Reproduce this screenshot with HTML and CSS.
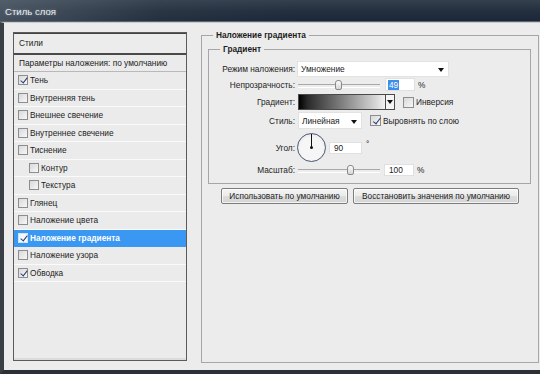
FILE: index.html
```html
<!DOCTYPE html>
<html>
<head>
<meta charset="utf-8">
<link rel="stylesheet" href="styles.css">
</head>
<body>
<div class="window">
  <div class="titlebar">Стиль слоя</div>
  <div class="frame">
    <div class="sidebar">
      <div class="side-head">Стили</div>
      <div class="side-list">
        <div class="row first">Параметры наложения: по умолчанию</div>
        <div class="row"><span class="cb on"></span>Тень</div>
        <div class="row"><span class="cb"></span>Внутренняя тень</div>
        <div class="row"><span class="cb"></span>Внешнее свечение</div>
        <div class="row"><span class="cb"></span>Внутреннее свечение</div>
        <div class="row"><span class="cb"></span>Тиснение</div>
        <div class="row sub"><span class="cb"></span>Контур</div>
        <div class="row sub"><span class="cb"></span>Текстура</div>
        <div class="row"><span class="cb"></span>Глянец</div>
        <div class="row"><span class="cb"></span>Наложение цвета</div>
        <div class="row active"><span class="cb on"></span>Наложение градиента</div>
        <div class="row"><span class="cb"></span>Наложение узора</div>
        <div class="row"><span class="cb on"></span>Обводка</div>
      </div>
    </div>
    <div class="main">
      <div class="group outer">
        <span class="legend">Наложение градиента</span>
        <div class="group inner">
          <span class="legend">Градиент</span>
          <div class="frow r1">
            <span class="flabel">Режим наложения:</span>
            <div class="select blend"><span>Умножение</span><i class="arrow"></i></div>
          </div>
          <div class="frow r2">
            <span class="flabel">Непрозрачность:</span>
            <div class="slider"><span class="thumb" style="left: 49%"></span></div>
            <div class="input"><span class="sel">49</span></div>
            <span class="unit">%</span>
          </div>
          <div class="frow r3">
            <span class="flabel">Градиент:</span>
            <div class="swatch"></div>
            <div class="swatch-arrow"><i class="arrow"></i></div>
            <span class="cb inv"></span><span class="cblabel">Инверсия</span>
          </div>
          <div class="frow r4">
            <span class="flabel">Стиль:</span>
            <div class="select style"><span>Линейная</span><i class="arrow"></i></div>
            <span class="cb on align"></span><span class="cblabel">Выровнять по слою</span>
          </div>
          <div class="frow r5">
            <span class="flabel">Угол:</span>
            <div class="dial"><span class="hand"></span><span class="dot"></span></div>
            <div class="input angle">90</div>
            <span class="deg">°</span>
          </div>
          <div class="frow r6">
            <span class="flabel">Масштаб:</span>
            <div class="slider"><span class="thumb" style="left: 63%"></span></div>
            <div class="input scale">100</div>
            <span class="unit">%</span>
          </div>
        </div>
        <div class="buttons">
          <button class="btn b1">Использовать по умолчанию</button>
          <button class="btn b2">Восстановить значения по умолчанию</button>
        </div>
      </div>
    </div>
  </div>
</div>
</body>
</html>
```
FILE: styles.css
```css
* { box-sizing: border-box; }
html, body { margin: 0; padding: 0; }
body {
  font-family: "Liberation Sans", Arial, sans-serif;
  font-size: 8.3px;
  color: #1c1c1c;
  background: #ececec;
}
.window {
  width: 540px;
  height: 374px;
  display: flex;
  flex-direction: column;
  background: #ececec;
  overflow: hidden;
}
.titlebar {
  height: 22px;
  flex: none;
  padding-left: 5px;
  line-height: 23px;
  font-size: 9.6px;
  color: #e9eef4;
  text-shadow: 0 0 3px rgba(255,255,255,0.35);
  background:
    linear-gradient(90deg, rgba(120,130,142,0.45) 0%, rgba(80,90,102,0.15) 30%, rgba(0,0,0,0) 55%),
    linear-gradient(#34404e 0%, #24303f 50%, #1c2737 100%);
  border-bottom: 1px solid #5a6473;
}
.frame {
  flex: 1;
  display: flex;
  background: #ececec;
  border-top: 1px solid #c9cbce;
  border-left: 4px solid #3a3f45;
  border-bottom: 4px solid #2b3036;
}

/* sidebar */
.sidebar {
  width: 174px;
  margin: 9px 0 9px 9px;
  display: flex;
  flex-direction: column;
  border: 1px solid #5b5b5b;
  background: #ebebeb;
  box-shadow: inset 0 -2px 0 #dcdcdc;
}
.side-head {
  height: 22px;
  flex: none;
  padding-left: 5px;
  line-height: 19px;
  border-top: 1px solid #444;
  border-bottom: 2px solid #4a4a4a;
  background: #ececec;
}
.side-list { flex: 1; }
.row {
  height: 17.5px;
  display: flex;
  align-items: center;
  padding-left: 4px;
  border-bottom: 1px solid #fafafa;
  white-space: nowrap;
}
.row.first {
  height: 17px;
  padding-left: 5px;
  border-bottom: 1px solid #b9b9b9;
}
.row.sub { padding-left: 15px; }
.row.active {
  background: #3a97f2;
  color: #fff;
  font-weight: bold;
  border-bottom-color: #3a97f2;
}
.cb {
  position: relative;
  display: inline-block;
  flex: none;
  width: 10px;
  height: 10px;
  margin-right: 2px;
  border: 1px solid #8c8d8f;
  background: linear-gradient(135deg, #d9d9d9, #f7f7f7);
}
.row.active .cb { border-color: #d0e4f8; background: #f4f7fb; }
.cb.on::after {
  content: "";
  position: absolute;
  left: 3px;
  top: 0px;
  width: 3px;
  height: 6px;
  border: solid #2a3f73;
  border-width: 0 1.5px 1.5px 0;
  transform: rotate(38deg);
}

/* main */
.main {
  flex: 1;
  display: flex;
  margin: 12px 1px 7px 14px;
}
.group {
  position: relative;
  border: 1px solid #a6a6a6;
}
.legend {
  position: absolute;
  top: -7px;
  left: 11px;
  padding: 0 3px;
  background: #ececec;
  font-weight: bold;
  line-height: 12px;
}
.outer { flex: 1; }
.inner {
  margin: 13px 7px 0 6px;
  padding: 11px 0 6px 0;
  height: 135px;
}
.frow {
  display: flex;
  align-items: center;
  white-space: nowrap;
}
.flabel {
  width: 86px;
  flex: none;
  text-align: right;
  margin-right: 2px;
}
.r1 { height: 16px; }
.r2 { height: 13px; margin-top: 1px; }
.r3 { height: 16px; margin-top: 3px; }
.r4 { height: 17px; margin-top: 2px; }
.r5 { height: 29px; margin-top: 4px; }
.r6 { height: 12px; margin-top: 2px; }

.select {
  position: relative;
  height: 100%;
  background: #fff;
  border: 1px solid #e2e2e2;
  display: flex;
  align-items: center;
  padding-left: 3px;
}
.select.blend { width: 152px; }
.select.style { width: 64px; margin-left: 1px; }
.arrow {
  display: block;
  width: 0;
  height: 0;
  border-left: 3.5px solid transparent;
  border-right: 3.5px solid transparent;
  border-top: 4px solid #111;
}
.select .arrow { position: absolute; right: 4px; top: 50%; margin-top: -1px; }

.slider {
  position: relative;
  width: 82px;
  height: 100%;
  margin-left: 1px;
  flex: none;
}
.slider::before {
  content: "";
  position: absolute;
  left: 0;
  right: 0;
  top: 50%;
  height: 2px;
  margin-top: -1px;
  border-top: 1px solid #a8a8a8;
  border-bottom: 1px solid #fff;
}
.thumb {
  position: absolute;
  top: 50%;
  width: 7px;
  height: 10px;
  margin: -5px 0 0 -3px;
  border: 1px solid #8a8a8a;
  border-radius: 3px 3px 2px 2px;
  background: linear-gradient(#fdfdfd, #d5d5d5);
}
.input {
  height: 100%;
  width: 30px;
  margin-left: 5px;
  background: #fff;
  border: 1px solid #e0e0e0;
  padding-left: 2px;
  display: flex;
  align-items: center;
}
.sel {
  background: #3d8ee8;
  color: #fff;
  padding: 0 1px;
  line-height: 10px;
}
.input.angle { width: 33px; height: 12px; margin-left: 3px; padding-left: 4px; }
.input.scale { margin-left: 4px; padding-left: 4px; }
.unit { margin-left: 3px; }
.deg { margin-left: 4px; align-self: flex-start; margin-top: 6px; }

.swatch {
  width: 88px;
  height: 100%;
  margin-left: 1px;
  border: 1px solid #4a4a4a;
  background: linear-gradient(90deg, #000 0%, #2a2a2a 10%, #808080 50%, #d8d8d8 90%, #f2f2f2 100%);
}
.swatch-arrow {
  width: 9px;
  height: 100%;
  border: 1px solid #4a4a4a;
  border-left: none;
  background: #f4f4f4;
  display: flex;
  align-items: center;
  justify-content: center;
}
.swatch-arrow .arrow { border-left-width: 3px; border-right-width: 3px; border-top-width: 4px; }
.cb.inv { margin-left: 8px; width: 11px; height: 11px; }
.cb.align { margin-left: 8px; width: 11px; height: 11px; }
.cb.align::after { left: 3.5px; top: 0; height: 7px; }
.cblabel { margin-left: 0; }

.dial {
  position: relative;
  width: 29px;
  height: 29px;
  border-radius: 50%;
  border: 1.5px solid #4c5873;
  background: radial-gradient(circle at 50% 55%, #f6f6f6 55%, #d6d8de 100%);
}
.hand {
  position: absolute;
  left: 50%;
  top: 0;
  width: 1px;
  height: 50%;
  margin-left: -0.5px;
  background: #111;
}
.dot {
  position: absolute;
  left: 50%;
  top: 50%;
  width: 3px;
  height: 3px;
  margin: -1.5px 0 0 -1.5px;
  border-radius: 50%;
  background: #111;
}

.buttons {
  display: flex;
  gap: 5px;
  margin: 4px 0 0 19px;
}
.btn {
  height: 16px;
  padding: 0;
  font-family: "Liberation Sans", Arial, sans-serif;
  font-size: 8.3px;
  color: #1c1c1c;
  border: 1px solid #7d7d7d;
  border-radius: 2px;
  background: linear-gradient(#f4f4f4 0%, #ebebeb 50%, #dddddd 51%, #d4d4d4 100%);
  box-shadow: inset 0 0 0 1px rgba(255,255,255,0.7);
}
.b1 { width: 127px; }
.b2 { width: 166px; }
```
